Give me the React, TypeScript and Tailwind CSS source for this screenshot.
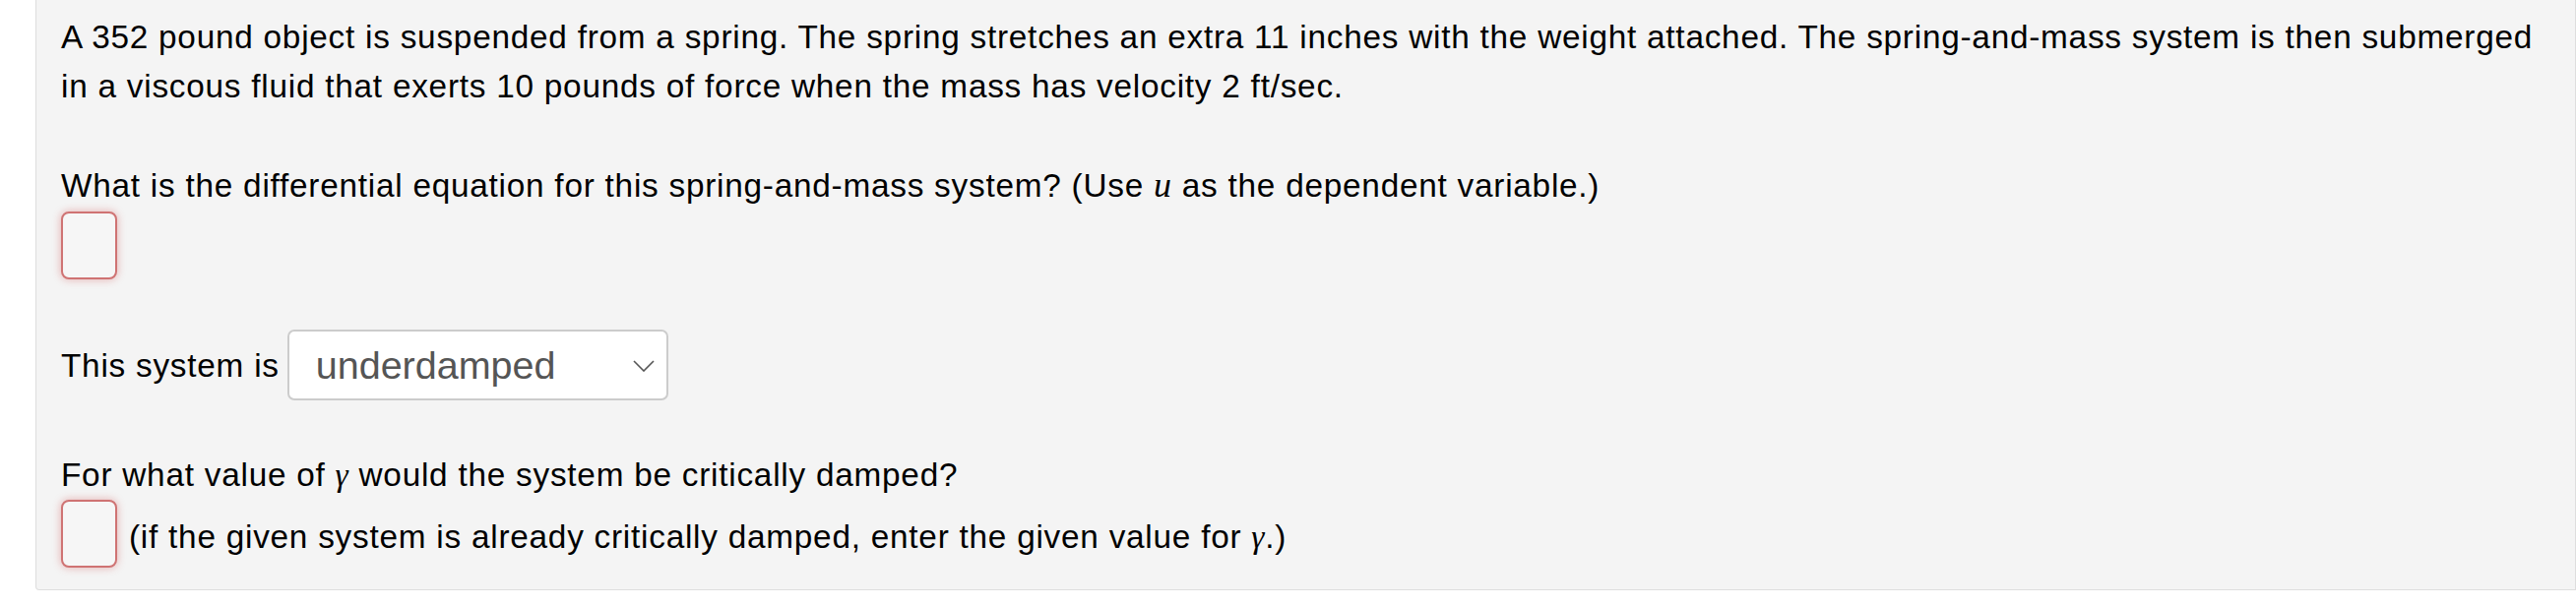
import React from 'react';

const AnswerBox: React.FC = () => (
  <span className="inline-block w-[57px] h-[69px] rounded-[8px] border-2 border-[#cf7373] bg-[#f6f6f6] shadow-[0_0_8px_rgba(200,40,40,0.35)]" />
);

const mathFont = { fontFamily: '"Liberation Serif", "DejaVu Serif", serif' };

const App: React.FC = () => {
  return (
    <div className="bg-white min-h-[616px] pl-[36px]">
      <div
        className="bg-[#f4f4f4] border-l border-r border-b border-[#dedede] rounded-bl-[4px] pl-[25px] pr-[10px] pt-[13px] pb-[22px] text-black text-[33.33px] leading-[50px] tracking-[0.76px]"
        style={{ fontFamily: '"Liberation Sans", Arial, sans-serif' }}
      >
        {/* problem statement */}
        <p>
          A 352 pound object is suspended from a spring. The spring stretches an extra 11 inches with the weight
          attached. The spring-and-mass system is then submerged
          <br />
          in a viscous fluid that exerts 10 pounds of force when the mass has velocity 2 ft/sec.
        </p>

        <p className="mt-[50px]">
          What is the differential equation for this spring-and-mass system? (Use{' '}
          <span className="italic text-[36px]" style={mathFont}>
            u
          </span>{' '}
          as the dependent variable.)
        </p>
        <div className="mt-px h-[69px] flex">
          <AnswerBox />
        </div>

        {/* damping select */}
        <div className="mt-[51px] flex items-center h-[72px]">
          <span className="mr-[8px] pt-[2px]">This system is</span>
          <div className="relative w-[387px] h-[72px] rounded-[7px] border-2 border-[#cccccc] bg-white flex items-center">
            <span className="pl-[27px] text-[#555555] text-[39.5px] leading-none pt-[2px] tracking-normal">
              underdamped
            </span>
            <svg
              className="absolute right-[12px] top-[29px]"
              width="22"
              height="12"
              viewBox="0 0 22 12"
              fill="none"
            >
              <path d="M1 1 L11 11 L21 1" stroke="#555555" strokeWidth="1.6" />
            </svg>
          </div>
        </div>

        <p className="mt-[51px]">
          For what value of{' '}
          <span className="italic" style={mathFont}>
            γ
          </span>{' '}
          would the system be critically damped?
        </p>
        <div className="flex items-center h-[69px]">
          <AnswerBox />
          <span className="ml-[12px] pt-[6px]">
            (if the given system is already critically damped, enter the given value for{' '}
            <span className="italic" style={mathFont}>
              γ
            </span>
            .)
          </span>
        </div>
      </div>
    </div>
  );
};

export default App;
